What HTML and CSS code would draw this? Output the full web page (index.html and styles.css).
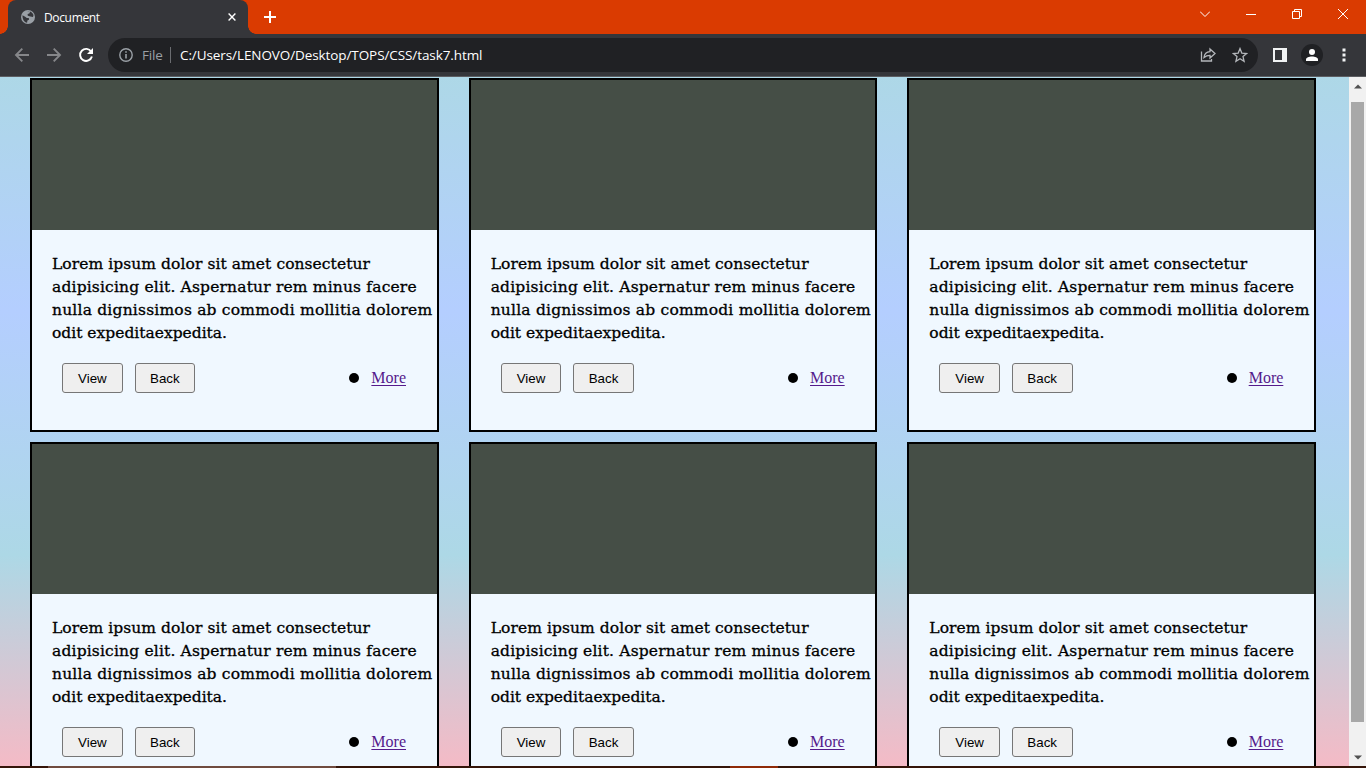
FILE: index.html
```html
<!DOCTYPE html>
<html lang="en">
<head>
<meta charset="utf-8">
<title>Document</title>
<link rel="stylesheet" href="styles.css">
</head>
<body>
<div class="browser">
  <header class="titlebar">
    <div class="tab">
      <svg class="globe" viewBox="0 0 14 14"><circle cx="7" cy="7" r="7" fill="#9aa0a6"/><path d="M1.500 5.300 4.200 6.700l1.600 1.200 2 .2.200 1.700-1.600.8-.3 2.200C3.300 12.300 1.300 9.500 1.500 5.300ZM6 1.500 9.200 1.600 8.300 3.400 6.600 4l.2 1.700 2.500.9 2.700.3.500-1.800C12 3 10 1.200 7.500 1.200Z" fill="#35363a"/></svg>
      <span class="tab-title">Document</span>
      <svg class="tab-close" viewBox="0 0 8 8"><path d="m.6.6 6.800 6.800M7.400.6.6 7.400" stroke="#fff" stroke-width="1.400"/></svg>
    </div>
    <svg class="new-tab" viewBox="0 0 12 12"><path d="M6 0v12M0 6h12" stroke="#fff" stroke-width="2"/></svg>
    <div class="window-controls">
      <svg width="10" height="10" viewBox="0 0 10 10"><path d="m0 2.500 5 5 5-5"/></svg>
      <svg width="10" height="10" viewBox="0 0 10 10"><path d="M0 5.500h10"/></svg>
      <svg width="10" height="10" viewBox="0 0 10 10"><path d="M.5 2.500h7v7h-7zM2.500 2.500v-2h7v7h-2"/></svg>
      <svg width="10" height="10" viewBox="0 0 10 10"><path d="m0 0 10 10M10 0 0 10"/></svg>
    </div>
  </header>
  <nav class="toolbar">
    <svg class="nav-icon dim" viewBox="0 0 14 14"><path d="M14 7H1M7.300.7 1 7l6.300 6.300"/></svg>
    <svg class="nav-icon dim" viewBox="0 0 14 14"><path d="M0 7h13M6.700.7 13 7l-6.300 6.300"/></svg>
    <svg class="nav-icon" viewBox="0 0 14 14"><path d="M12.200 3.700A6 6 0 1 0 12.900 8.500"/><path d="M14 0v6H8z" fill="#fff" stroke="none"/></svg>
    <div class="address">
      <svg class="info" viewBox="0 0 14 14"><circle cx="7" cy="7" r="6.200" fill="none" stroke="#9aa0a6" stroke-width="1.400"/><path d="M7 6v4.500M7 3.300v1.500" stroke="#9aa0a6" stroke-width="1.600"/></svg>
      <span class="scheme">File</span>
      <span class="url">C:/Users/LENOVO/Desktop/TOPS/CSS/task7.html</span>
      <svg class="share" viewBox="0 0 16 16"><path d="M1.500 4.500v9.500h10v-2M4 10.500c.4-3.600 2.500-5.700 6-5.900V2l5 4.500-5 4.500V8.400c-2.500 0-4.300.6-6 2.100Z"/></svg>
      <svg class="star" viewBox="0 0 16 16"><path d="m8 1.600 1.800 4.500 4.900.4-3.700 3.100 1.100 4.700L8 11.800l-4.100 2.500L5 9.600 1.300 6.500l4.900-.4Z"/></svg>
    </div>
    <svg class="panel" viewBox="0 0 14 14"><path fill="#f1f3f4" fill-rule="evenodd" d="M0 0h14v14H0zM2 2v10h7V2z"/></svg>
    <svg class="profile" viewBox="0 0 22 22"><circle cx="11" cy="11" r="11" fill="#202124"/><circle cx="11" cy="8" r="3" fill="#fff"/><path d="M5 17v-1.500c0-4 12-4 12 0V17z" fill="#fff"/></svg>
    <svg class="kebab" viewBox="0 0 4 14"><path d="M.5.500h3v3h-3zM.5 5.500h3v3h-3zM.5 10.500h3v3h-3z" fill="#f1f3f4"/></svg>
  </nav>
  <div class="viewport">
    <main class="cards">
      <article class="card">
        <div class="cover"></div>
        <p class="copy"><span class="l1">Lorem ipsum dolor sit amet consectetur</span><span class="l2">adipisicing elit. Aspernatur rem minus facere</span><span class="l3">nulla dignissimos ab commodi mollitia dolorem</span><span class="l4">odit expeditaexpedita.</span></p>
        <div class="actions"><button class="btn">View</button><button class="btn">Back</button><span class="dot"></span><a class="more" href="#">More</a></div>
      </article>
      <article class="card">
        <div class="cover"></div>
        <p class="copy"><span class="l1">Lorem ipsum dolor sit amet consectetur</span><span class="l2">adipisicing elit. Aspernatur rem minus facere</span><span class="l3">nulla dignissimos ab commodi mollitia dolorem</span><span class="l4">odit expeditaexpedita.</span></p>
        <div class="actions"><button class="btn">View</button><button class="btn">Back</button><span class="dot"></span><a class="more" href="#">More</a></div>
      </article>
      <article class="card">
        <div class="cover"></div>
        <p class="copy"><span class="l1">Lorem ipsum dolor sit amet consectetur</span><span class="l2">adipisicing elit. Aspernatur rem minus facere</span><span class="l3">nulla dignissimos ab commodi mollitia dolorem</span><span class="l4">odit expeditaexpedita.</span></p>
        <div class="actions"><button class="btn">View</button><button class="btn">Back</button><span class="dot"></span><a class="more" href="#">More</a></div>
      </article>
      <article class="card">
        <div class="cover"></div>
        <p class="copy"><span class="l1">Lorem ipsum dolor sit amet consectetur</span><span class="l2">adipisicing elit. Aspernatur rem minus facere</span><span class="l3">nulla dignissimos ab commodi mollitia dolorem</span><span class="l4">odit expeditaexpedita.</span></p>
        <div class="actions"><button class="btn">View</button><button class="btn">Back</button><span class="dot"></span><a class="more" href="#">More</a></div>
      </article>
      <article class="card">
        <div class="cover"></div>
        <p class="copy"><span class="l1">Lorem ipsum dolor sit amet consectetur</span><span class="l2">adipisicing elit. Aspernatur rem minus facere</span><span class="l3">nulla dignissimos ab commodi mollitia dolorem</span><span class="l4">odit expeditaexpedita.</span></p>
        <div class="actions"><button class="btn">View</button><button class="btn">Back</button><span class="dot"></span><a class="more" href="#">More</a></div>
      </article>
      <article class="card">
        <div class="cover"></div>
        <p class="copy"><span class="l1">Lorem ipsum dolor sit amet consectetur</span><span class="l2">adipisicing elit. Aspernatur rem minus facere</span><span class="l3">nulla dignissimos ab commodi mollitia dolorem</span><span class="l4">odit expeditaexpedita.</span></p>
        <div class="actions"><button class="btn">View</button><button class="btn">Back</button><span class="dot"></span><a class="more" href="#">More</a></div>
      </article>
    </main>
    <div class="scrollbar">
      <svg width="8" height="5" viewBox="0 0 8 5"><path d="M0 4.500 4 .5l4 4z" fill="#505050"/></svg>
      <div class="thumb"></div>
      <svg width="8" height="5" viewBox="0 0 8 5"><path d="m0 .5 4 4 4-4z" fill="#505050"/></svg>
    </div>
  </div>
  <footer class="taskbar-edge"><div class="task-window"></div><div class="task-active"></div></footer>
</div>
</body>
</html>
```
FILE: styles.css
```css
* { box-sizing: border-box; }
body { margin: 0; overflow: hidden; }
svg { display: block; flex: none; }

.browser {
  width: 1366px;
  height: 768px;
  display: flex;
  flex-direction: column;
  overflow: hidden;
  font-family: "Open Sans", "Noto Sans", sans-serif;
}

/* Window frame */
.titlebar {
  height: 34px;
  flex: none;
  display: flex;
  background: #da3b01;
  padding-left: 8px;
}
.tab {
  position: relative;
  width: 240px;
  display: flex;
  align-items: center;
  padding: 0 12px 0 13px;
  background: #35363a;
  border-radius: 8px 8px 0 0;
  color: #fff;
  font-size: 12px;
}
.tab::before,
.tab::after {
  content: "";
  position: absolute;
  bottom: 0;
  width: 8px;
  height: 8px;
}
.tab::before { left: -8px; background: radial-gradient(circle at 0 0, transparent 7.5px, #35363a 8px); }
.tab::after { right: -8px; background: radial-gradient(circle at 100% 0, transparent 7.5px, #35363a 8px); }
.globe { width: 14px; height: 14px; }
.tab-title { margin-left: 9px; flex: 1; letter-spacing: -0.35px; }
.tab-close { width: 8px; height: 8px; }
.new-tab { width: 12px; height: 12px; margin: 11px 0 0 16px; }
.window-controls {
  margin-left: auto;
  display: flex;
  gap: 36px;
  padding: 9px 18px 0 0;
}
.window-controls svg { fill: none; stroke: #fff; stroke-width: 1; }

.toolbar {
  height: 43px;
  flex: none;
  display: flex;
  align-items: center;
  background: #35363a;
  border-bottom: 1px solid #5c5d61;
  padding-left: 15px;
}
.nav-icon { width: 14px; height: 14px; margin-right: 18px; fill: none; stroke: #fff; stroke-width: 1.9; overflow: visible; }
.nav-icon.dim { stroke: #86878a; }
.address {
  width: 1150px;
  height: 34px;
  margin-left: -3px;
  display: flex;
  align-items: center;
  border-radius: 17px;
  background: #202124;
  padding: 0 10px 0 11px;
}
.info { width: 14px; height: 14px; }
.scheme {
  margin-left: 9px;
  width: 29px;
  height: 16px;
  line-height: 16px;
  border-right: 1px solid #6a6c70;
  color: #9aa0a6;
  font-size: 13.5px;
  letter-spacing: -0.2px;
}
.url { margin-left: 9px; color: #fff; font-size: 13.5px; letter-spacing: -0.09px; white-space: nowrap; }
.share { width: 16px; height: 16px; margin-left: auto; }
.star { width: 16px; height: 16px; margin-left: 16px; }
.share, .star { fill: none; stroke: #b4b7bb; stroke-width: 1.3; }
.panel { width: 14px; height: 14px; margin-left: 15px; }
.profile { width: 22px; height: 22px; margin-left: 14px; }
.kebab { width: 4px; height: 14px; margin-left: 19px; }

/* Page */
.viewport { height: 689px; flex: none; display: flex; overflow: hidden; }
.cards {
  width: 1349px;
  height: 689px;
  flex: none;
  display: grid;
  grid-template-columns: repeat(3, 408.66px);
  grid-auto-rows: 354px;
  gap: 10px 30px;
  padding: 1px 0 0 30px;
  background: linear-gradient(lightblue -9px, #b4ceff 234px, lightblue 478px, lightpink 721px);
}
.card { border: 2px solid #000; background: #f0f8ff; }
.cover { height: 150px; background: #454e46; }
.copy {
  margin: 23px 0 0 20px;
  color: #000;
  font-family: "DejaVu Serif", serif;
  font-size: 15.5px;
  line-height: 23px;
  white-space: nowrap;
  -webkit-text-stroke: 0.3px #000;
}
.copy span { display: block; }
.l1 { letter-spacing: 0.07px; }
.l2 { letter-spacing: 0.17px; }
.l3 { letter-spacing: 0.2px; }
.actions { display: flex; align-items: center; margin: 18px 30.3px 0 30px; height: 30px; }
.btn {
  height: 30px;
  width: 60.7px;
  margin-right: 11.85px;
  padding: 0;
  border: 1px solid #767676;
  border-radius: 3px;
  background: #efefef;
  color: #000;
  font: 13.333px "Liberation Sans", Arial, sans-serif;
}
.dot { width: 10px; height: 10px; border-radius: 50%; background: #000; margin-left: auto; }
.more { margin-left: 12px; width: 35px; color: #551a8b; font: 16px "Liberation Serif", serif; text-underline-offset: 2px; }

.scrollbar {
  width: 17px;
  display: flex;
  flex-direction: column;
  align-items: center;
  background: #f1f1f1;
  padding-top: 7px;
}
.thumb { width: 13px; height: 620px; margin: 13px 0 33px; background: #a8a8a8; }

.taskbar-edge { height: 2px; flex: none; display: flex; background: #351509; padding-left: 48px; }
.task-window { width: 288px; background: #704b3f; }
.task-active { width: 48px; margin-left: 394px; background: #8f2a08; }
```
